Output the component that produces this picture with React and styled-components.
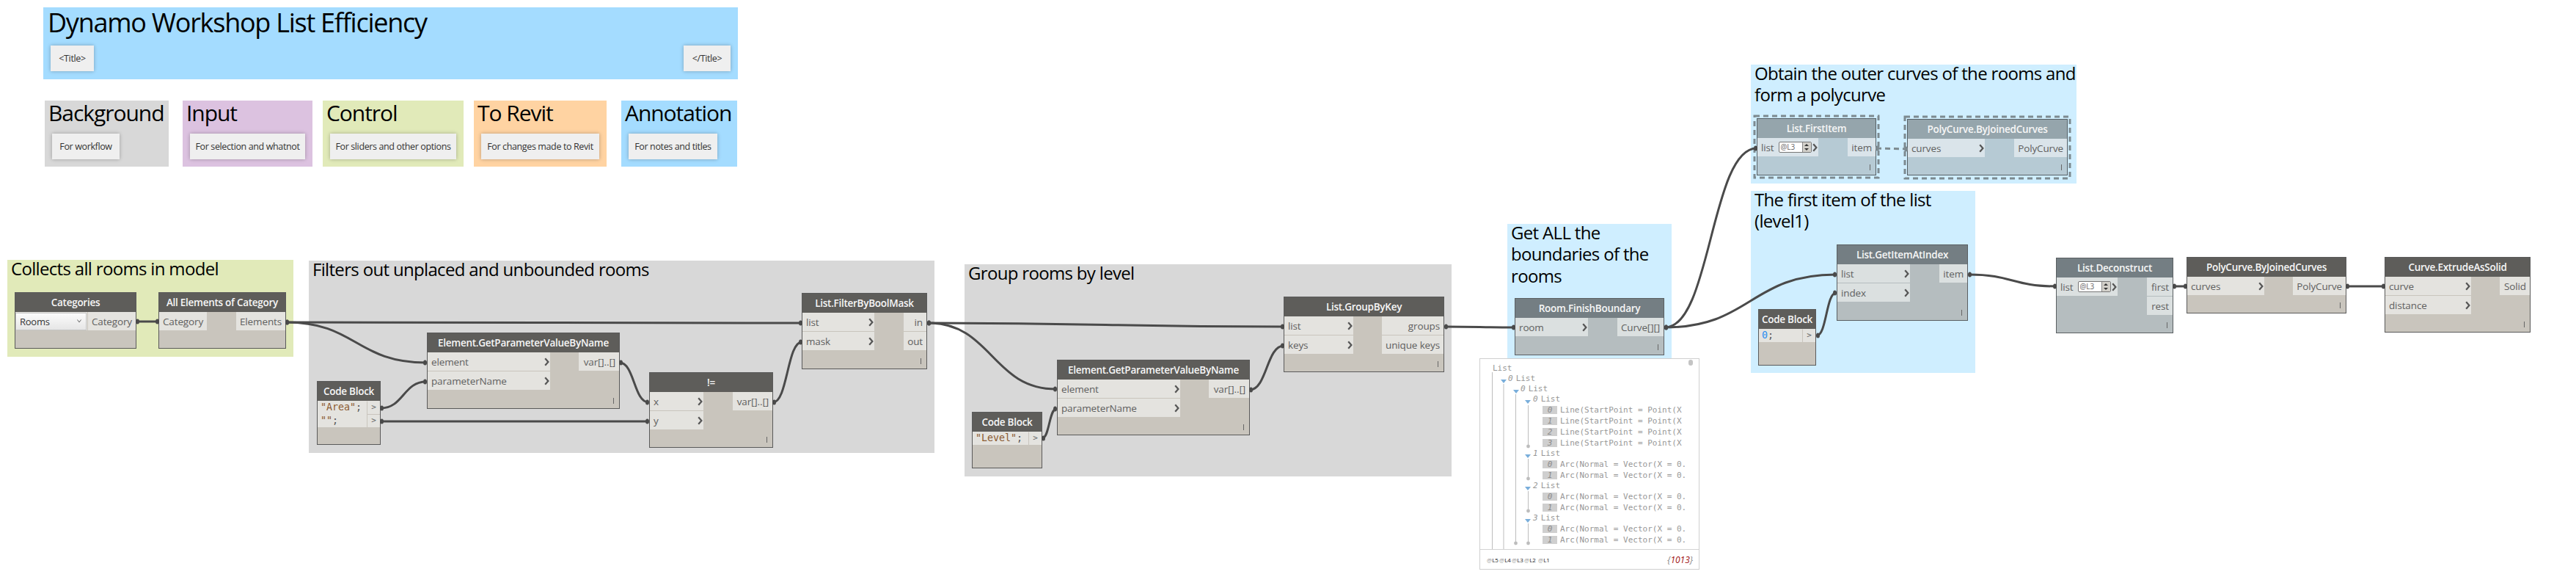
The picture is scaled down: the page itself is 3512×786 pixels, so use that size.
import React from 'react';
import styled, { createGlobalStyle } from 'styled-components';

const GlobalStyle = createGlobalStyle`
  html, body { margin: 0; padding: 0; background: #fff; }
`;

const Canvas = styled.div`
  position: relative;
  width: 3512px;
  height: 786px;
  overflow: hidden;
  background: #fff;
  font-family: "Open Sans", "Noto Sans", sans-serif;
`;

const GroupBox = styled.div`
  position: absolute;
  left: ${p => p.$x}px;
  top: ${p => p.$y}px;
  width: ${p => p.$w}px;
  height: ${p => p.$h}px;
  background: ${p => p.$bg};
  box-sizing: border-box;
`;

const GroupTitle = styled.div`
  margin-top: -3px;
  padding-left: ${p => p.$pad || 5}px;
  font-size: ${p => p.$size}px;
  line-height: ${p => p.$lh}px;
  letter-spacing: ${p => p.$track || '-0.028em'};
  color: #000;
  white-space: pre;
`;

const NoteRow = styled.div`
  display: flex;
  justify-content: space-between;
  padding: ${p => p.$top}px 10px 0 10px;
`;

const Note = styled.div`
  width: ${p => p.$w}px;
  height: 35px;
  background: #efefef;
  box-shadow: 0 0 5px rgba(0, 0, 0, 0.28);
  display: flex;
  align-items: center;
  justify-content: center;
  font-size: 12.5px;
  letter-spacing: -0.03em;
  color: #333;
  white-space: nowrap;
`;

const TONES = {
  normal: { head: '#5e5d5a', body: '#c9c5bd', row: '#e4e3df', line: '#5a5a5a' },
  frozen: { head: '#747e83', body: '#b5bdbf', row: '#dbe0e0', line: '#5a5f62' },
  selected: { head: '#95a5ac', body: '#b6cad4', row: '#dae4ea', line: '#555f64' },
};

const NodeBox = styled.div`
  position: absolute;
  left: ${p => p.$x}px;
  top: ${p => p.$y}px;
  width: ${p => p.$w}px;
  height: ${p => p.$h}px;
  box-sizing: border-box;
  border: 1px solid ${p => TONES[p.$tone].line};
  background: ${p => TONES[p.$tone].body};
  display: flex;
  flex-direction: column;
  &::after {
    content: '';
    display: ${p => (p.$tick ? 'block' : 'none')};
    position: absolute;
    right: 7px;
    bottom: 6px;
    width: 1px;
    height: 8px;
    background: #666;
  }
`;

const NodeHead = styled.div`
  height: 26px;
  flex: none;
  background: ${p => TONES[p.$tone].head};
  color: #f6f6f6;
  font-size: 13.5px;
  font-weight: 600;
  letter-spacing: -0.02em;
  display: flex;
  align-items: center;
  justify-content: center;
  white-space: nowrap;
`;

const NodeBody = styled.div`
  display: flex;
  justify-content: space-between;
  align-items: flex-start;
`;

const PortColumn = styled.div`
  width: ${p => p.$w}px;
  display: flex;
  flex-direction: column;
  gap: 1px;
`;

const PortRow = styled.div`
  height: 25px;
  box-sizing: border-box;
  background: ${p => TONES[p.$tone].row};
  display: flex;
  align-items: center;
  justify-content: ${p => (p.$out ? 'flex-end' : 'space-between')};
  padding: ${p => (p.$out ? '0 5px 0 0' : '0 1px 0 5px')};
  font-size: 13.5px;
  letter-spacing: -0.01em;
  color: #606060;
  white-space: nowrap;
`;

const Combo = styled.div`
  width: 98px;
  height: 24px;
  margin-left: -5px;
  box-sizing: border-box;
  padding: 0 6px 0 5px;
  background: linear-gradient(#fbfbfb, #e6e6e6);
  border: 1px solid #c6c6c6;
  display: flex;
  align-items: center;
  justify-content: space-between;
  font-size: 13px;
  letter-spacing: -0.02em;
  color: #333;
`;

const ListCell = styled.div`
  display: flex;
  align-items: center;
  gap: 6px;
`;

const Spinner = styled.div`
  width: 45px;
  height: 15px;
  box-sizing: border-box;
  background: #fff;
  border: 1px solid #777;
  border-radius: 2px;
  display: flex;
  justify-content: space-between;
  font-size: 10px;
  line-height: 13px;
  color: #666;
  padding-left: 2px;
`;

const SpinnerButtons = styled.div`
  width: 11px;
  background: #d2d0ca;
  border-left: 1px solid #888;
  display: flex;
  flex-direction: column;
  align-items: center;
  justify-content: space-around;
`;

const CodeBody = styled.div`
  display: flex;
  flex-direction: column;
`;

const CodeRow = styled.div`
  height: 18px;
  display: flex;
  background: ${p => TONES[p.$tone].row};
`;

const CodeText = styled.div`
  flex: 1;
  padding-left: 4px;
  font-family: "DejaVu Sans Mono", monospace;
  font-size: 13.3px;
  line-height: 18px;
  color: #555;
  white-space: pre;
`;

const CodeString = styled.span`
  color: #8a5a30;
`;

const CodeNumber = styled.span`
  color: #2a8df0;
`;

const CodeOut = styled.div`
  width: 18px;
  flex: none;
  border-left: 1px solid #c9c5bd;
  border-top: 1px solid ${p => (p.$first ? 'transparent' : '#c9c5bd')};
  box-sizing: border-box;
  font-family: "DejaVu Sans Mono", monospace;
  font-size: 11px;
  line-height: 16px;
  color: #666;
  text-align: center;
`;

const Wires = styled.svg`
  position: absolute;
  left: 0;
  top: 0;
  pointer-events: none;
`;

const Watch = styled.div`
  position: absolute;
  left: 2017px;
  top: 488px;
  width: 300px;
  height: 288px;
  box-sizing: border-box;
  border: 1px solid #cfcfcf;
  background: #fff;
  display: flex;
  flex-direction: column;
`;

const WatchTree = styled.div`
  position: relative;
  flex: 1;
  overflow: hidden;
  padding-top: 6px;
  font-family: "DejaVu Sans Mono", monospace;
  font-size: 11px;
  color: #979797;
`;

const TreeLines = styled.svg`
  position: absolute;
  left: 0;
  top: 0;
`;

const WatchRow = styled.div`
  height: ${p => (p.$item ? 15 : 14)}px;
  line-height: ${p => (p.$item ? 15 : 14)}px;
  padding-left: ${p => p.$indent}px;
  display: flex;
  align-items: center;
  gap: 4px;
  white-space: pre;
`;

const RowIndex = styled.i`
  font-style: italic;
`;

const ItemIndex = styled.i`
  width: 20px;
  height: 11px;
  line-height: 11px;
  background: #cfcfcf;
  text-align: center;
  font-style: italic;
  color: #8c8c8c;
`;

const WatchFooter = styled.div`
  height: 27px;
  flex: none;
  border-top: 1px solid #d4d4d4;
  box-sizing: border-box;
  padding: 0 8px 0 9px;
  display: flex;
  align-items: center;
  justify-content: space-between;
`;

const Levels = styled.div`
  display: flex;
  gap: 2px;
  font-size: 8px;
  color: #222;
`;

const Level = styled.span`
  width: ${p => p.$w || 15}px;
  white-space: nowrap;
`;

const At = styled.span`
  color: #999;
`;

const Count = styled.div`
  font-size: 12px;
  font-style: italic;
  color: #888;
`;

const CountValue = styled.span`
  color: #a01010;
`;

const WatchDot = styled.div`
  position: absolute;
  right: 8px;
  top: 1px;
  width: 6px;
  height: 8px;
  border-radius: 3px;
  background: #c4c4c4;
`;

const GROUPS = [
  { x: 421, y: 355, w: 853, h: 262, bg: '#d8d8d8', text: 'Filters out unplaced and unbounded rooms' },
  { x: 10, y: 354, w: 390, h: 132, bg: '#e1eab9', text: 'Collects all rooms in model' },
  { x: 1315, y: 360, w: 664, h: 289, bg: '#d8d8d8', text: 'Group rooms by level' },
  { x: 2055, y: 305, w: 224, h: 184, bg: '#cfeeff', text: 'Get ALL the\nboundaries of the\nrooms' },
  { x: 2387, y: 88, w: 444, h: 162, bg: '#cfeeff', text: 'Obtain the outer curves of the rooms and\nform a polycurve' },
  { x: 2387, y: 260, w: 306, h: 248, bg: '#cfeeff', text: 'The first item of the list\n(level1)' },
];

const LEGEND = [
  { x: 61, w: 169, bg: '#d8d8d8', title: 'Background', note: 'For workflow', noteW: 92 },
  { x: 249, w: 177, bg: '#dcc2e0', title: 'Input', note: 'For selection and whatnot', noteW: 157 },
  { x: 440, w: 192, bg: '#e1eab9', title: 'Control', note: 'For sliders and other options', noteW: 172 },
  { x: 646, w: 181, bg: '#ffd3a2', title: 'To Revit', note: 'For changes made to Revit', noteW: 161 },
  { x: 847, w: 158, bg: '#a4dcff', title: 'Annotation', note: 'For notes and titles', noteW: 121 },
];

const NODES = [
  { x: 20, y: 398, w: 166, h: 77, title: 'Categories', inW: 98, outW: 65, combo: 'Rooms', outputs: ['Category'], tick: false },
  { x: 216, y: 398, w: 174, h: 77, title: 'All Elements of Category', inW: 65, outW: 67, inputs: [{ name: 'Category', plain: true }], outputs: ['Elements'], tick: false },
  { x: 582, y: 453, w: 263, h: 104, title: 'Element.GetParameterValueByName', inW: 167, outW: 55, inputs: ['element', 'parameterName'], outputs: ['var[]..[]'] },
  { x: 885, y: 507, w: 169, h: 103, title: '!=', inW: 73, outW: 54, inputs: ['x', 'y'], outputs: ['var[]..[]'] },
  { x: 1093, y: 399, w: 171, h: 104, title: 'List.FilterByBoolMask', inW: 98, outW: 31, inputs: ['list', 'mask'], outputs: ['in', 'out'] },
  { x: 1441, y: 490, w: 263, h: 103, title: 'Element.GetParameterValueByName', inW: 167, outW: 55, inputs: ['element', 'parameterName'], outputs: ['var[]..[]'] },
  { x: 1750, y: 404, w: 219, h: 103, title: 'List.GroupByKey', inW: 94, outW: 84, inputs: ['list', 'keys'], outputs: ['groups', 'unique keys'] },
  { x: 2065, y: 406, w: 204, h: 78, title: 'Room.FinishBoundary', tone: 'frozen', inW: 99, outW: 63, inputs: ['room'], outputs: ['Curve[][]'] },
  { x: 2395, y: 161, w: 163, h: 78, title: 'List.FirstItem', tone: 'selected', inW: 83, outW: 38, inputs: [{ name: 'list', level: true }], outputs: ['item'] },
  { x: 2600, y: 162, w: 219, h: 77, title: 'PolyCurve.ByJoinedCurves', tone: 'selected', inW: 105, outW: 72, inputs: ['curves'], outputs: ['PolyCurve'] },
  { x: 2504, y: 333, w: 179, h: 104, title: 'List.GetItemAtIndex', tone: 'frozen', inW: 99, outW: 38, inputs: ['list', 'index'], outputs: ['item'] },
  { x: 2803, y: 351, w: 160, h: 103, title: 'List.Deconstruct', tone: 'frozen', inW: 83, outW: 35, inputs: [{ name: 'list', level: true }], outputs: ['first', 'rest'] },
  { x: 2981, y: 350, w: 218, h: 77, title: 'PolyCurve.ByJoinedCurves', inW: 105, outW: 72, inputs: ['curves'], outputs: ['PolyCurve'] },
  { x: 3251, y: 350, w: 199, h: 103, title: 'Curve.ExtrudeAsSolid', inW: 117, outW: 41, inputs: ['curve', 'distance'], outputs: ['Solid'] },
];

const CODE_BLOCKS = [
  { x: 432, y: 519, w: 87, h: 87, rows: [<CodeString key="a">"Area"</CodeString>, <CodeString key="b">""</CodeString>] },
  { x: 1325, y: 561, w: 96, h: 77, rows: [<CodeString key="c">"Level"</CodeString>] },
  { x: 2397, y: 421, w: 79, h: 77, rows: [<CodeNumber key="d">0</CodeNumber>] },
];

// from port -> to port, curve control points sit at the mid x like Dynamo does
const WIRES = [
  [186, 438, 216, 438],
  [390, 439, 1093, 440],
  [390, 439, 581, 494],
  [519, 556, 581, 520],
  [519, 574, 884, 574],
  [845, 494, 884, 548],
  [1054, 548, 1093, 466],
  [1265, 440, 1750, 445],
  [1265, 440, 1440, 530],
  [1421, 597, 1440, 557],
  [1704, 531, 1750, 471],
  [1970, 445, 2065, 446],
  [2270, 446, 2395, 202],
  [2270, 446, 2503, 374],
  [2477, 457, 2503, 399],
  [2684, 374, 2803, 390],
  [2963, 390, 2981, 390],
  [3199, 390, 3251, 390],
];

const wirePath = ([x1, y1, x2, y2]) => {
  const mx = (x1 + x2) / 2;
  return `M${x1} ${y1} C${mx} ${y1} ${mx} ${y2} ${x2} ${y2}`;
};

const head = (indent, label, index) => ({ indent, label, index });
const item = (index, label) => ({ item: true, indent: 85, index, label });
const LINE = 'Line(StartPoint = Point(X';
const ARC = 'Arc(Normal = Vector(X = 0.';

const WATCH = [
  head(17, 'List'),
  head(38, 'List', 0),
  head(55, 'List', 0),
  head(72, 'List', 0),
  item(0, LINE), item(1, LINE), item(2, LINE), item(3, LINE),
  head(72, 'List', 1),
  item(0, ARC), item(1, ARC),
  head(72, 'List', 2),
  item(0, ARC), item(1, ARC),
  head(72, 'List', 3),
  item(0, ARC), item(1, ARC),
];

const Chevron = () => (
  <svg width="7" height="12" viewBox="0 0 7 12">
    <path d="M1.2 1.2 L5.4 6 L1.2 10.8" fill="none" stroke="#555" strokeWidth="2.2" />
  </svg>
);

const Caret = () => (
  <svg width="6" height="5" viewBox="0 0 6 5">
    <path d="M0.5 0.5 L3 4 L5.5 0.5" fill="none" stroke="#666" strokeWidth="1" />
  </svg>
);

const SpinArrow = ({ down }) => (
  <svg width="6" height="3" viewBox="0 0 6 3">
    <path d={down ? 'M0 0 H6 L3 3 Z' : 'M0 3 H6 L3 0 Z'} fill="#333" />
  </svg>
);

const InputPort = ({ port, tone }) => {
  const p = typeof port === 'string' ? { name: port } : port;
  if (p.level) {
    return (
      <PortRow $tone={tone}>
        <ListCell>
          {p.name}
          <Spinner>
            @L3
            <SpinnerButtons><SpinArrow /><SpinArrow down /></SpinnerButtons>
          </Spinner>
        </ListCell>
        <Chevron />
      </PortRow>
    );
  }
  return (
    <PortRow $tone={tone}>
      {p.name}
      {!p.plain && <Chevron />}
    </PortRow>
  );
};

const GraphNode = ({ x, y, w, h, title, tone = 'normal', inW, outW, inputs = [], outputs = [], combo, tick = true }) => (
  <NodeBox $x={x} $y={y} $w={w} $h={h} $tone={tone} $tick={tick}>
    <NodeHead $tone={tone}>{title}</NodeHead>
    <NodeBody>
      <PortColumn $w={inW}>
        {combo
          ? <PortRow $tone={tone}><Combo>{combo}<Caret /></Combo></PortRow>
          : inputs.map((port, i) => <InputPort key={i} port={port} tone={tone} />)}
      </PortColumn>
      <PortColumn $w={outW}>
        {outputs.map(name => <PortRow key={name} $tone={tone} $out>{name}</PortRow>)}
      </PortColumn>
    </NodeBody>
  </NodeBox>
);

const CodeBlock = ({ x, y, w, h, rows }) => (
  <NodeBox $x={x} $y={y} $w={w} $h={h} $tone="normal">
    <NodeHead $tone="normal">Code Block</NodeHead>
    <CodeBody>
      {rows.map((value, i) => (
        <CodeRow key={i} $tone="normal">
          <CodeText>{value};</CodeText>
          <CodeOut $first={i === 0}>&gt;</CodeOut>
        </CodeRow>
      ))}
    </CodeBody>
  </NodeBox>
);

const App = () => (
  <Canvas>
    <GlobalStyle />

    <GroupBox $x={59} $y={10} $w={947} $h={98} $bg="#a4dcff">
      <GroupTitle $size={36} $lh={48} $pad={6} $track="-0.035em">Dynamo Workshop List Efficiency</GroupTitle>
      <NoteRow $top={7}>
        <Note $w={59}>&lt;Title&gt;</Note>
        <Note $w={64}>&lt;/Title&gt;</Note>
      </NoteRow>
    </GroupBox>

    {LEGEND.map(g => (
      <GroupBox key={g.title} $x={g.x} $y={137} $w={g.w} $h={90} $bg={g.bg}>
        <GroupTitle $size={30} $lh={40} $pad={5} $track="-0.035em">{g.title}</GroupTitle>
        <NoteRow $top={8}>
          <Note $w={g.noteW}>{g.note}</Note>
        </NoteRow>
      </GroupBox>
    ))}

    {GROUPS.map(g => (
      <GroupBox key={g.text} $x={g.x} $y={g.y} $w={g.w} $h={g.h} $bg={g.bg}>
        <GroupTitle $size={24} $lh={29.3}>{g.text}</GroupTitle>
      </GroupBox>
    ))}

    {NODES.map(n => <GraphNode key={`${n.title}${n.x}`} {...n} />)}
    {CODE_BLOCKS.map(c => <CodeBlock key={c.x} {...c} />)}

    <Wires width="3512" height="786" viewBox="0 0 3512 786">
      <g fill="none" stroke="#7d8a90" strokeWidth="3" strokeDasharray="7 5">
        <rect x="2392" y="158" width="169" height="84" />
        <rect x="2597" y="159" width="225" height="84" />
        <path d="M2558 202 L2600 203" />
      </g>
      <ellipse cx="2559.5" cy="202" rx="2.5" ry="3.5" fill="#7d8a90" />
      <ellipse cx="2598.5" cy="203" rx="2.5" ry="3.5" fill="#7d8a90" />
      {WIRES.map((w, i) => (
        <g key={i}>
          <path d={wirePath(w)} fill="none" stroke="#4a4a4a" strokeWidth="3" />
          <ellipse cx={w[0] + 1.5} cy={w[1]} rx="2.5" ry="3.5" fill="#4a4a4a" />
          <ellipse cx={w[2] - 1.5} cy={w[3]} rx="2.5" ry="3.5" fill="#4a4a4a" />
        </g>
      ))}
    </Wires>

    <Watch>
      <WatchDot />
      <WatchTree>
        <TreeLines width="298" height="260" viewBox="2018 489 298 260">
          <g stroke="#bdbdbd" strokeWidth="1" fill="none">
            <path d="M2034.5 507 V748 M2050 523 V748 M2066.5 537 V740 M2083.5 552 V608 M2083.5 625 V651 M2083.5 669 V696 M2083.5 713 V740" />
          </g>
          <g fill="#bdbdbd">
            <circle cx="2066.5" cy="740" r="2.4" />
            <circle cx="2083.5" cy="608" r="2.4" />
            <circle cx="2083.5" cy="652" r="2.4" />
            <circle cx="2083.5" cy="696" r="2.4" />
            <circle cx="2083.5" cy="740" r="2.4" />
          </g>
          <g fill="#79aedb">
            {[[2050, 517], [2067, 531], [2083, 545], [2083, 619], [2083, 663], [2083, 707]].map(([x, y]) => (
              <path key={y} d={`M${x - 4} ${y} H${x + 4} L${x} ${y + 5} Z`} />
            ))}
          </g>
        </TreeLines>
        {WATCH.map((r, i) => (
          <WatchRow key={i} $item={r.item} $indent={r.indent}>
            {r.item ? <ItemIndex>{r.index}</ItemIndex> : r.index !== undefined && <RowIndex>{r.index}</RowIndex>}
            {r.label}
          </WatchRow>
        ))}
      </WatchTree>
      <WatchFooter>
        <Levels>
          <Level><At>@</At>L5</Level>
          <Level><At>@</At>L4</Level>
          <Level><At>@</At>L3</Level>
          <Level $w={17}><At>@</At>L2</Level>
          <Level><At>@</At>L1</Level>
        </Levels>
        <Count>{'{'}<CountValue>1013</CountValue>{'}'}</Count>
      </WatchFooter>
    </Watch>
  </Canvas>
);

export default App;
